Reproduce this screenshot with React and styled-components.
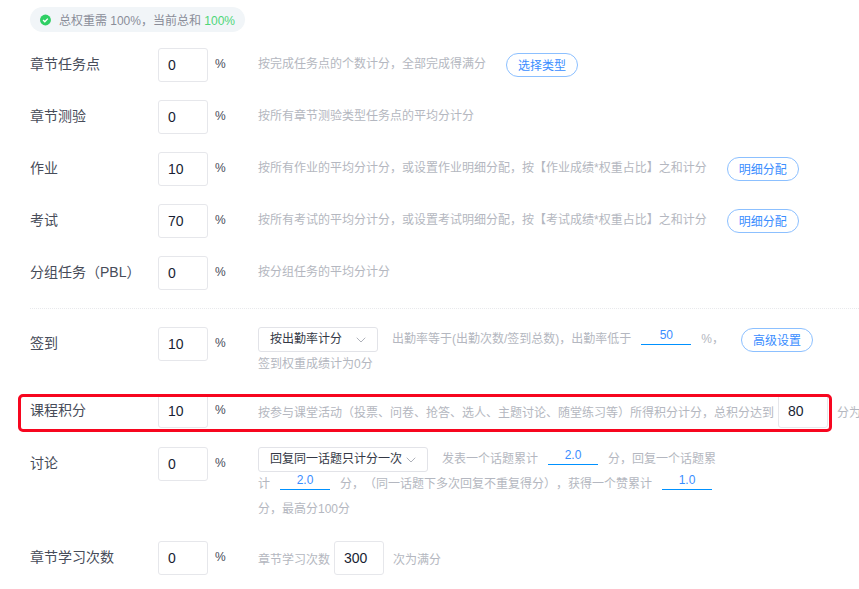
import React from 'react';
import styled, { createGlobalStyle } from 'styled-components';
import { ChevronDown } from 'lucide-react';

const FONT = '"Liberation Sans", "Noto Sans CJK SC", sans-serif';

const GlobalStyle = createGlobalStyle`
  html, body {
    margin: 0;
    padding: 0;
    background: #fff;
    overflow: hidden;
    font-family: ${FONT};
    text-spacing-trim: space-all;
  }
`;

const CheckIcon = () => (
  <svg width="12" height="12" viewBox="0 0 12 12">
    <circle cx="6" cy="6" r="6" fill="#2fcf64" />
    <path d="M3.4 6.1 L5.3 8 L8.6 4.5" fill="none" stroke="#fff" strokeWidth="1.5" />
  </svg>
);

const App = () => (
  <Page>
    <GlobalStyle />
    <Notice>
      <CheckIcon />
      <span>总权重需 100%，当前总和 <Ok>100%</Ok></span>
    </Notice>

    <Row>
      <Label>章节任务点</Label>
      <Box defaultValue="0" />
      <Percent>%</Percent>
      <Desc>
        按完成任务点的个数计分，全部完成得满分
        <Pill>选择类型</Pill>
      </Desc>
    </Row>
    <Row>
      <Label>章节测验</Label>
      <Box defaultValue="0" />
      <Percent>%</Percent>
      <Desc>按所有章节测验类型任务点的平均分计分</Desc>
    </Row>
    <Row>
      <Label>作业</Label>
      <Box defaultValue="10" />
      <Percent>%</Percent>
      <Desc>
        按所有作业的平均分计分，或设置作业明细分配，按【作业成绩*权重占比】之和计分
        <Pill>明细分配</Pill>
      </Desc>
    </Row>
    <Row>
      <Label>考试</Label>
      <Box defaultValue="70" />
      <Percent>%</Percent>
      <Desc>
        按所有考试的平均分计分，或设置考试明细分配，按【考试成绩*权重占比】之和计分
        <Pill>明细分配</Pill>
      </Desc>
    </Row>
    <Row>
      <Label>分组任务（PBL）</Label>
      <Box defaultValue="0" />
      <Percent>%</Percent>
      <Desc>按分组任务的平均分计分</Desc>
    </Row>

    <Divider />

    <Row $tail={17}>
      <Label>签到</Label>
      <Box defaultValue="10" />
      <Percent>%</Percent>
      <Flow>
        <Dropdown $width={120}>
          按出勤率计分
          <ChevronDown size={16} strokeWidth={1.2} color="#9a9ea8" />
        </Dropdown>
        出勤率等于(出勤次数/签到总数)，出勤率低于
        <Underline defaultValue="50" />
        %，
        <Pill $gap={17}>高级设置</Pill>
        <br />
        签到权重成绩计为0分
      </Flow>
    </Row>

    <Row $tail={19}>
      <Highlight />
      <Label>课程积分</Label>
      <Box defaultValue="10" />
      <Percent>%</Percent>
      <Inline>
        按参与课堂活动（投票、问卷、抢答、选人、主题讨论、随堂练习等）所得积分计分，总积分达到
        <Box defaultValue="80" />
        分为满分
      </Inline>
    </Row>

    <Row $tail={19}>
      <Label>讨论</Label>
      <Box defaultValue="0" />
      <Percent>%</Percent>
      <Flow $wrap>
        <Dropdown $width={170}>
          回复同一话题只计分一次
          <ChevronDown size={16} strokeWidth={1.2} color="#9a9ea8" />
        </Dropdown>
        发表一个话题累计
        <Underline defaultValue="2.0" />
        分，回复一个话题累计
        <Underline defaultValue="2.0" />
        分，（同一话题下多次回复不重复得分），获得一个赞累计
        <Underline defaultValue="1.0" />
        分，最高分100分
      </Flow>
    </Row>

    <Row>
      <Label>章节学习次数</Label>
      <Box defaultValue="0" />
      <Percent>%</Percent>
      <Inline>
        章节学习次数
        <Box defaultValue="300" />
        次为满分
      </Inline>
    </Row>
  </Page>
);

const Page = styled.div`
  width: 859px;
  height: 589px;
  overflow: hidden;
  box-sizing: border-box;
  padding: 7px 0 0 30px;
`;

const Notice = styled.div`
  display: flex;
  align-items: center;
  gap: 8px;
  width: 215px;
  height: 25px;
  box-sizing: border-box;
  padding: 0 10px;
  margin-bottom: 16px;
  border-radius: 13px;
  background: #f1f5f8;
  white-space: nowrap;
  font-size: 12px;
  color: #8a8d99;
`;

const Ok = styled.span`
  color: #4fd678;
`;

const Row = styled.div`
  position: relative;
  display: flex;
  align-items: flex-start;
  margin-bottom: ${(p) => p.$tail || 18}px;
  white-space: nowrap;
`;

const Label = styled.div`
  width: 128px;
  flex-shrink: 0;
  height: 34px;
  line-height: 32px;
  font-size: 14px;
  color: #474c59;
`;

const Box = styled.input`
  width: 50px;
  height: 34px;
  flex-shrink: 0;
  box-sizing: border-box;
  padding: 0 0 0 9px;
  border: 1px solid #e6e7eb;
  border-radius: 3px;
  outline: none;
  background: #fff;
  font-family: ${FONT};
  font-size: 14px;
  color: #181e33;
`;

const Percent = styled.div`
  width: 50px;
  flex-shrink: 0;
  padding-left: 7px;
  box-sizing: border-box;
  line-height: 33px;
  font-size: 12px;
  color: #474c59;
`;

const Desc = styled.div`
  padding-top: 4px;
  line-height: 24px;
  font-size: 12px;
  color: #b4b7c0;
`;

const Flow = styled.div`
  width: ${(p) => (p.$wrap ? '468px' : 'auto')};
  white-space: ${(p) => (p.$wrap ? 'normal' : 'nowrap')};
  line-height: 25px;
  font-size: 12px;
  color: #b4b7c0;
`;

const Inline = styled.div`
  display: flex;
  align-items: center;
  gap: 4px;
  height: 34px;
  font-size: 12px;
  color: #b4b7c0;

  & > input {
    margin-right: 5px;
  }
`;

const Pill = styled.button`
  width: 72px;
  height: 24px;
  margin-left: ${(p) => p.$gap || 20}px;
  padding: 0;
  vertical-align: middle;
  border: 1px solid #8cc0ff;
  border-radius: 12px;
  background: #fff;
  font-family: ${FONT};
  font-size: 12px;
  color: #3a8dff;
`;

const Dropdown = styled.div`
  display: inline-flex;
  align-items: center;
  justify-content: space-between;
  width: ${(p) => p.$width}px;
  height: 25px;
  box-sizing: border-box;
  margin-right: 14px;
  padding: 0 8px 0 11px;
  vertical-align: top;
  border: 1px solid #e2e3e8;
  border-radius: 3px;
  line-height: 23px;
  font-size: 12px;
  color: #333845;
`;

const Underline = styled.input`
  width: 50px;
  height: 16px;
  box-sizing: border-box;
  margin: 0 10px;
  padding: 0 0 2px;
  vertical-align: 4px;
  border: none;
  border-bottom: 1px solid #0091ff;
  outline: none;
  text-align: center;
  font-family: ${FONT};
  font-size: 12px;
  color: #3a8dff;
`;

const Divider = styled.div`
  height: 0;
  margin: 0 0 18px;
  border-top: 1px dotted #e8e9ec;
`;

// sits on top of the row, the red mark from the annotated screenshot
const Highlight = styled.div`
  position: absolute;
  left: -12px;
  top: 0;
  width: 814px;
  height: 38px;
  box-sizing: border-box;
  border: 3px solid #f7061f;
  border-radius: 5px;
  pointer-events: none;
  z-index: 1;
`;

export default App;
